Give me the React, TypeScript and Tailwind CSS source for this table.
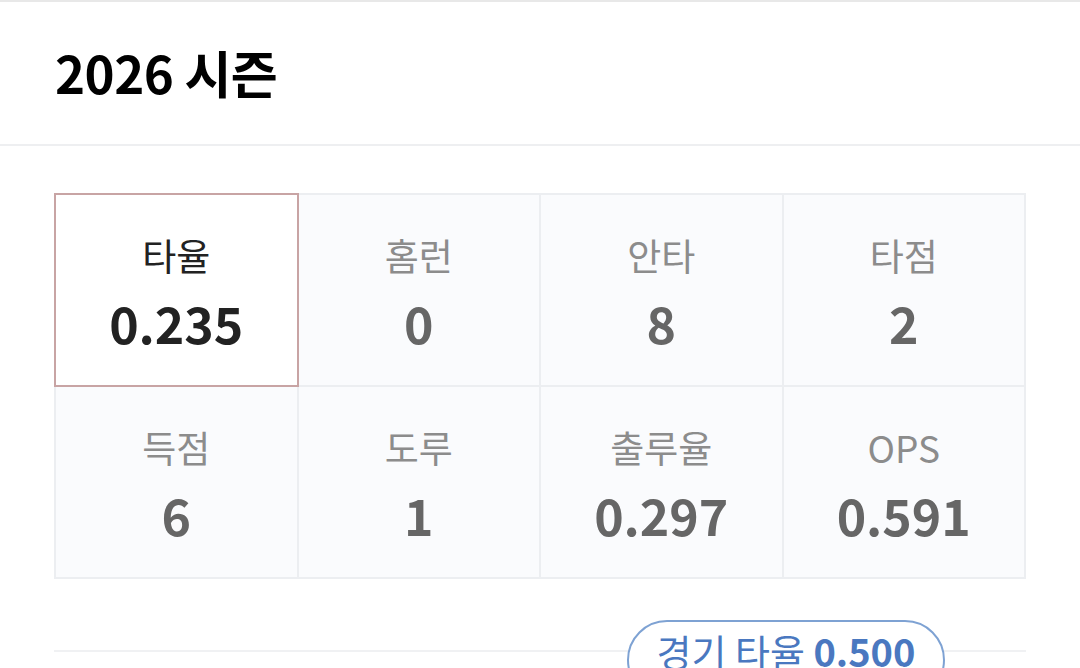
const stats = [
  { label: "타율", value: "0.235", active: true },
  { label: "홈런", value: "0" },
  { label: "안타", value: "8" },
  { label: "타점", value: "2" },
  { label: "득점", value: "6" },
  { label: "도루", value: "1" },
  { label: "출루율", value: "0.297" },
  { label: "OPS", value: "0.591" },
];

export default function App() {
  return (
    <div
      className="w-[1080px] h-[668px] overflow-hidden bg-white border-t-2 border-[#e8e8e8]"
      style={{ fontFamily: '"Noto Sans CJK KR", "Noto Sans", sans-serif' }}
    >
      {/* Header */}
      <div className="h-[144px] border-b-2 border-[#eeeff1] flex items-center px-[55px] pb-[2px]">
        <h1 className="text-[51px] font-bold text-black leading-none tracking-[-0.5px]">2026 시즌</h1>
      </div>

      {/* Stats grid */}
      <div className="mx-[54px] mt-[47px] grid grid-cols-4 gap-[2px] p-[2px] bg-[#eceef1]">
        {stats.map((s) => (
          <div
            key={s.label}
            className={
              s.active
                ? "h-[190px] flex flex-col items-center justify-center pt-[4px] bg-white outline-2 outline-[#c8a4a4] relative z-10"
                : "h-[190px] flex flex-col items-center justify-center pt-[4px] bg-[#fafbfd]"
            }
          >
            <span
              className={
                s.active
                  ? "text-[37px] leading-none text-[#222222]"
                  : "text-[37px] leading-none text-[#8c8c8c]"
              }
            >
              {s.label}
            </span>
            <span
              className={
                s.active
                  ? "mt-[23px] text-[50px] font-bold leading-none text-[#222222]"
                  : "mt-[23px] text-[50px] font-bold leading-none text-[#666666]"
              }
            >
              {s.value}
            </span>
          </div>
        ))}
      </div>

      {/* Chart area */}
      <div className="relative mx-[54px] mt-[70px] h-[80px]">
        <div className="absolute left-0 right-0 top-[1px] h-[2px] bg-[#f0f1f3]" />
        <div className="absolute left-[573px] top-[-29px] w-[318px] h-[80px] rounded-full border-2 border-[#7ea2d3] bg-white flex justify-center pt-[5px]">
          <span className="text-[38px] leading-[48px] text-[#4a78c0] whitespace-nowrap">
            경기 타율 <span className="font-bold">0.500</span>
          </span>
        </div>
      </div>
    </div>
  );
}
